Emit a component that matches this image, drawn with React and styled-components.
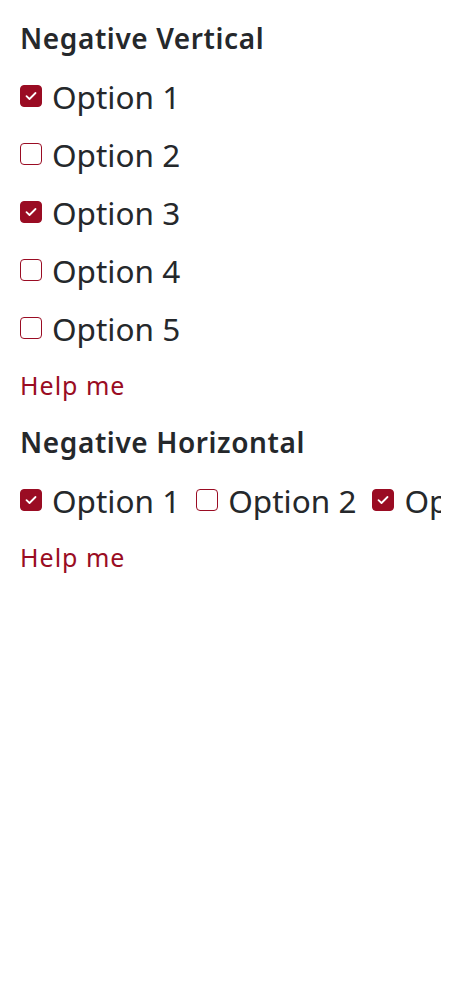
import React from "react";
import styled, { createGlobalStyle } from "styled-components";

const Global = createGlobalStyle`
  html, body { margin: 0; padding: 0; background: #fff; }
  body { font-family: "Noto Sans", "Open Sans", sans-serif; color: #25282b; }
`;

const Page = styled.div`
  padding: 9px 20px 20px;
  width: 461px;
  box-sizing: border-box;
`;

const Group = styled.fieldset`
  border: 0;
  margin: 0;
  padding: 0;
  min-width: 0;
`;

const Legend = styled.legend`
  padding: 0;
  font-size: 28px;
  font-weight: 600;
  letter-spacing: 0.6px;
  line-height: 58px;
  color: #25282b;
`;

const List = styled.div`
  display: flex;
  flex-direction: ${(p) => (p.$horizontal ? "row" : "column")};
  gap: ${(p) => (p.$horizontal ? "16px" : "0")};
  overflow: hidden;
  white-space: nowrap;
`;

const Item = styled.label`
  display: flex;
  align-items: center;
  gap: 10px;
  height: 58px;
  flex-shrink: 0;
  font-size: 31.5px;
  color: #25282b;
`;

const Box = styled.span`
  width: 22px;
  height: 22px;
  box-sizing: border-box;
  border-radius: 4px;
  display: flex;
  align-items: center;
  justify-content: center;
  flex-shrink: 0;
  background: ${(p) => (p.$checked ? "#9a0c23" : "#fff")};
  border: 1.5px solid #9a0c23;
`;

const Help = styled.div`
  font-size: 25px;
  letter-spacing: 1px;
  color: #9a0c23;
  line-height: 56px;
`;

const Check = () => (
  <svg width="12" height="10" viewBox="0 0 12 10" fill="none">
    <path d="M1.5 5.2 L4.5 8 L10.5 2" stroke="#fff" strokeWidth="1.8" strokeLinecap="round" strokeLinejoin="round" />
  </svg>
);

const Option = ({ label, checked }) => (
  <Item>
    <Box $checked={checked}>{checked && <Check />}</Box>
    {label}
  </Item>
);

const vertical = [
  ["Option 1", true],
  ["Option 2", false],
  ["Option 3", true],
  ["Option 4", false],
  ["Option 5", false],
];

const horizontal = [
  ["Option 1", true],
  ["Option 2", false],
  ["Option 3", true],
];

export default function App() {
  return (
    <Page>
      <Global />
      <Group>
        <Legend>Negative Vertical</Legend>
        <List>
          {vertical.map(([l, c]) => (
            <Option key={l} label={l} checked={c} />
          ))}
        </List>
        <Help>Help me</Help>
      </Group>
      <Group>
        <Legend>Negative Horizontal</Legend>
        <List $horizontal>
          {horizontal.map(([l, c]) => (
            <Option key={l} label={l} checked={c} />
          ))}
        </List>
        <Help>Help me</Help>
      </Group>
    </Page>
  );
}
